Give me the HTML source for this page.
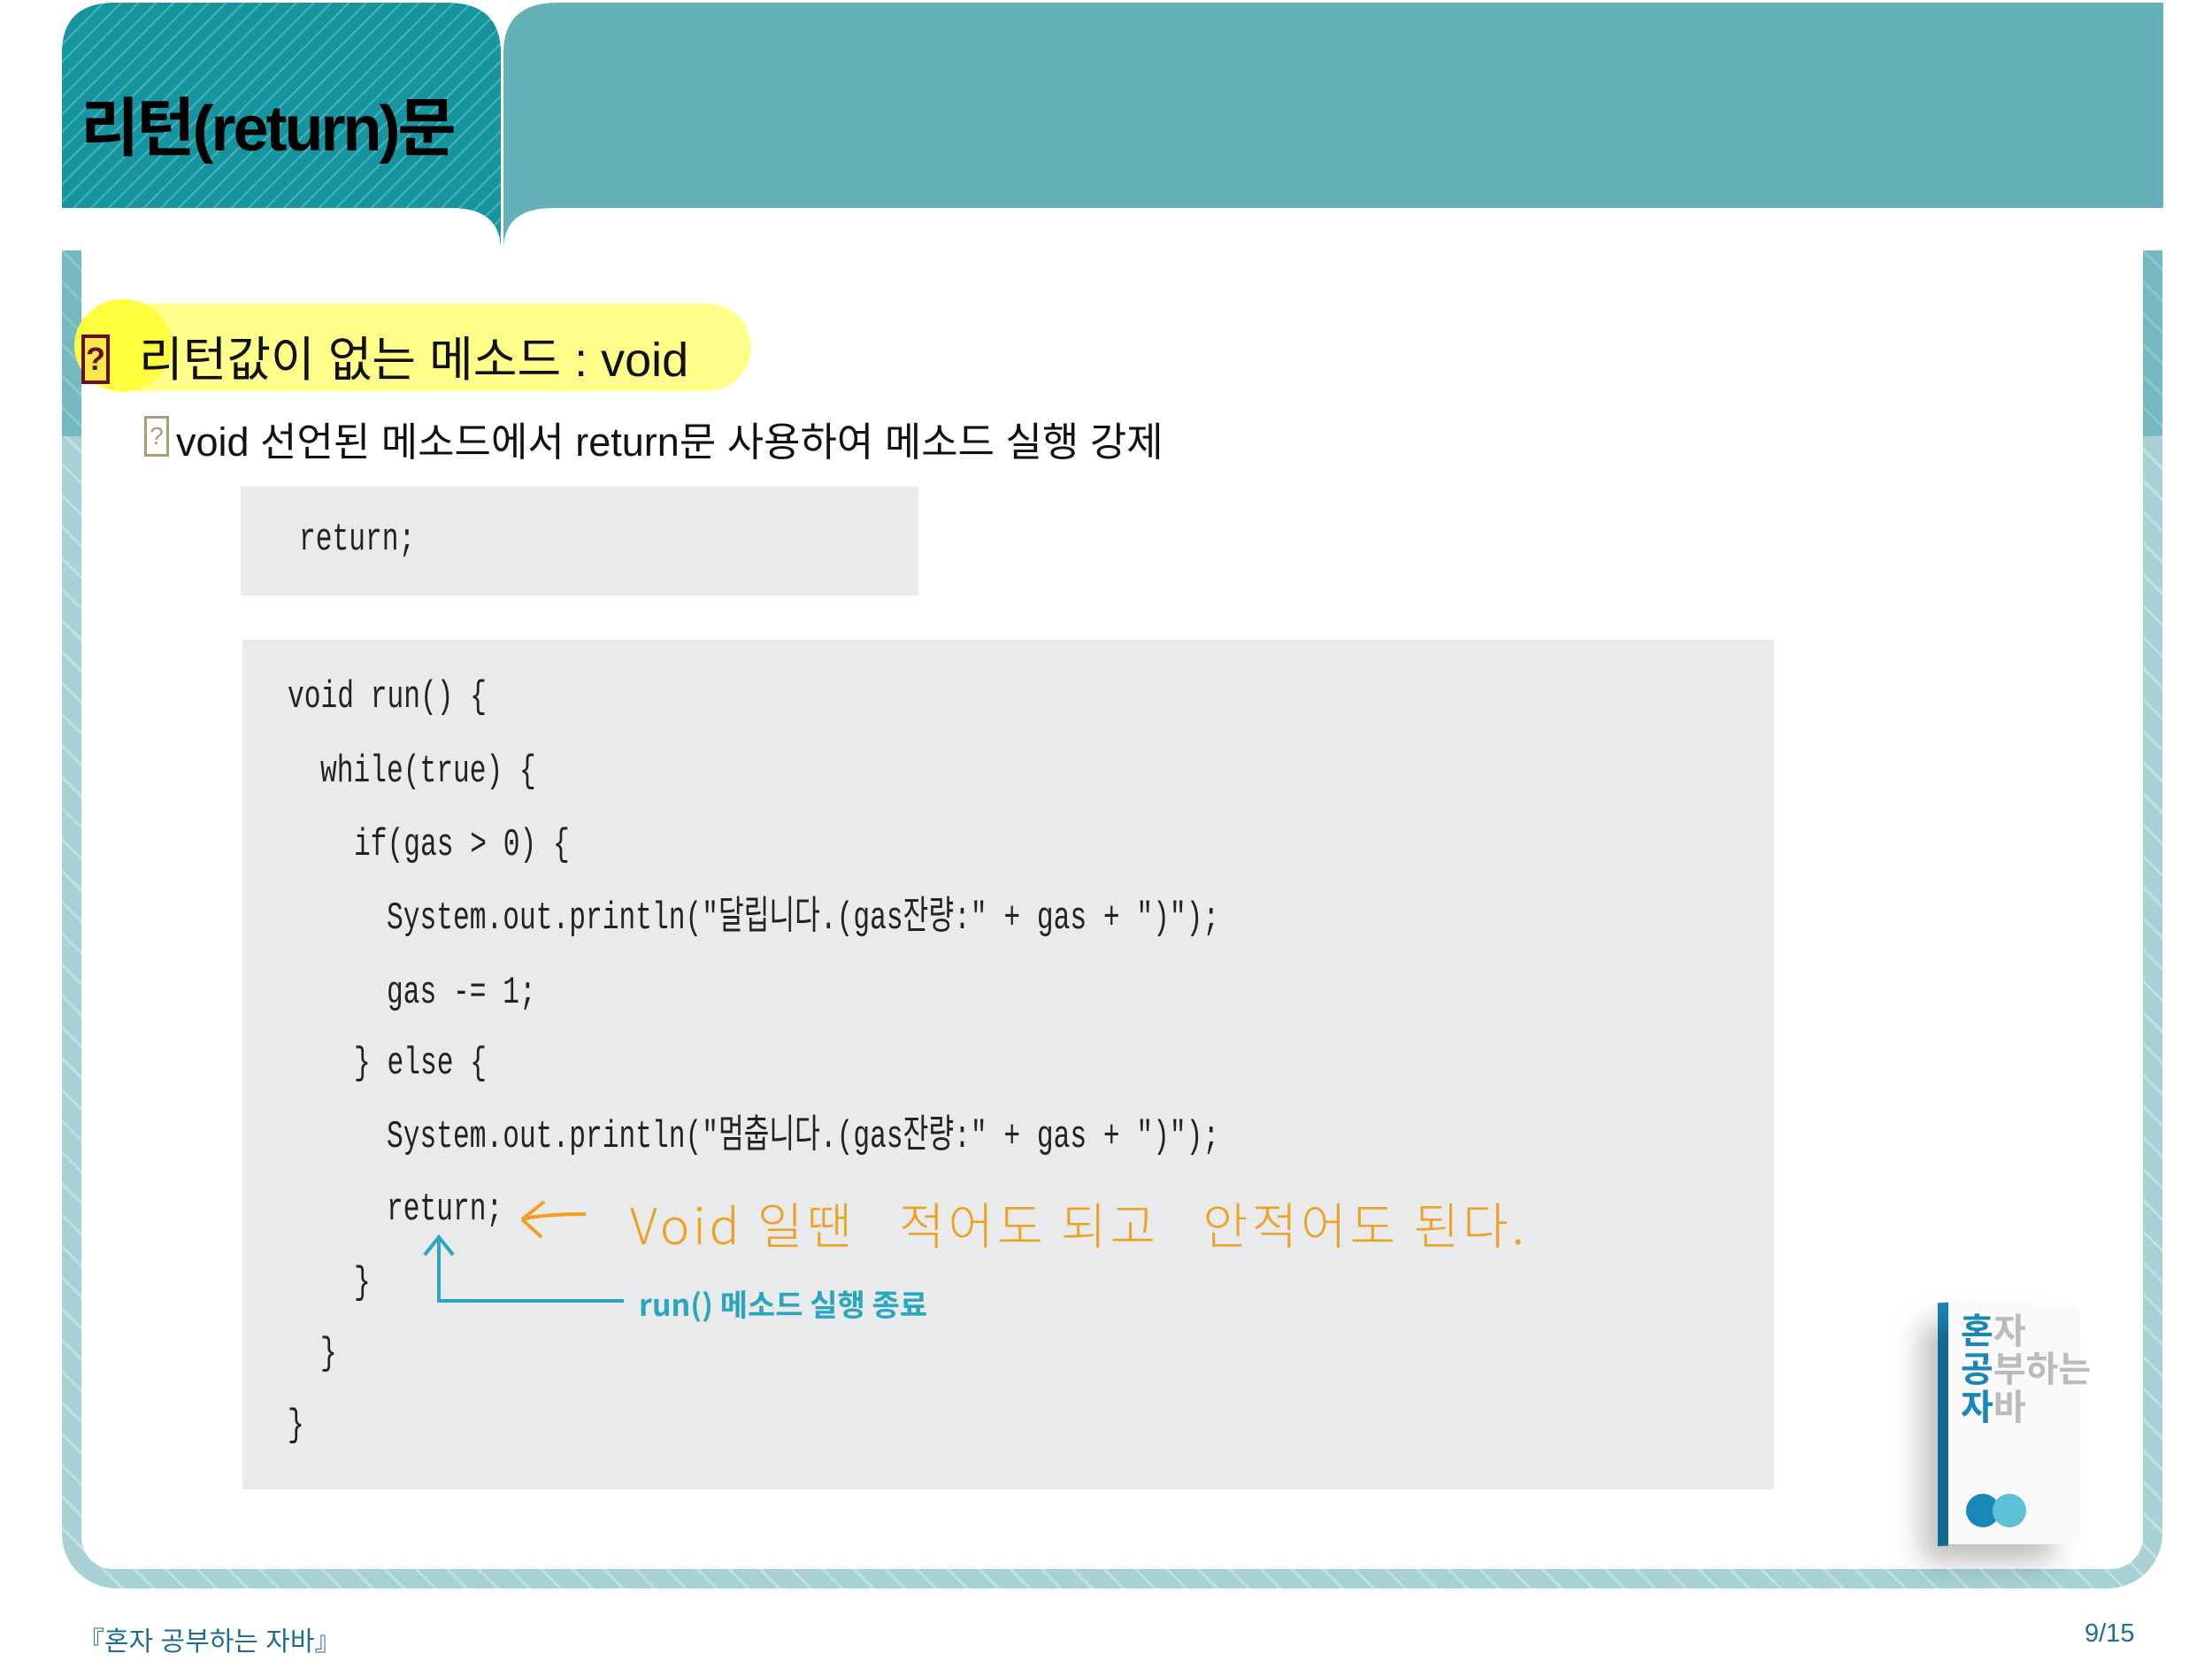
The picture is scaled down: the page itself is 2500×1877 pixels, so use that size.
<!DOCTYPE html>
<html><head><meta charset="utf-8"><style>
*{margin:0;padding:0;box-sizing:border-box}
body{width:2500px;height:1877px;background:#fff;position:relative;overflow:hidden;font-family:"Liberation Sans","Noto Sans CJK KR",sans-serif}
.abs{position:absolute}
.frame{left:70px;top:283px;width:2374px;height:1512px;border:22px solid transparent;border-top:none;border-bottom-width:22px;border-radius:0 0 62px 62px;
background:repeating-linear-gradient(45deg,#a7d1d5 0 22px,#c2e0e3 22px 25px) border-box;}
.frame .in{position:absolute;inset:0;background:#fff;border-radius:0 0 36px 36px}
.dark{top:283px;width:22px;height:210px;background:repeating-linear-gradient(45deg,#74b8c0 0 22px,#8ec6cc 22px 25px)}
.code{background:#e8eaeb}
.mono{font-family:"Liberation Mono","Noto Sans CJK KR",monospace;font-size:44px;color:#222;transform:scaleX(.71);transform-origin:0 50%;white-space:pre;line-height:1}
</style></head><body>
<svg class="abs" style="left:0;top:0" width="2500" height="300">
<defs><pattern id="st" width="14" height="14" patternUnits="userSpaceOnUse" patternTransform="rotate(45)"><rect width="14" height="14" fill="#15959f"/><rect x="0" width="2" height="14" fill="#4fb0b8"/></pattern></defs>
<path d="M70 60 Q70 3 130 3 L505 3 Q566 3 566 60 L566 283 Q566 235 510 235 L70 235 Z" fill="url(#st)"/>
<path d="M569 60 Q569 3 630 3 L2445 3 L2445 235 L625 235 Q569 235 569 283 Z" fill="#65b1ba"/>
</svg>
<div class="abs" style="left:91px;top:86px;font-size:72px;font-weight:bold;letter-spacing:-3px;color:#000">리턴(return)문</div>
<div class="abs frame"><div class="in"></div></div>
<div class="abs dark" style="left:70px"></div>
<div class="abs dark" style="left:2422px"></div>
<div class="abs" style="left:88px;top:343px;width:761px;height:99px;background:#ffff8a;border-radius:50px"></div>
<div class="abs" style="left:84px;top:338px;width:110px;height:105px;background:#ffff40;border-radius:50%"></div>
<div class="abs" style="left:92px;top:378px;width:32px;height:56px;border:4px solid #6a0f20;background:#f6e94a;font:bold 36px 'Liberation Sans';color:#6a0f20;text-align:center;line-height:48px">?</div>
<div class="abs" style="left:157px;top:362px;font-size:54px;color:#111">리턴값이 없는 메소드 : void</div>
<div class="abs" style="left:163px;top:470px;width:28px;height:46px;border:3px solid #a8a070;font:28px 'Liberation Sans';color:#a8a070;text-align:center;line-height:40px">?</div>
<div class="abs" style="left:199px;top:463px;font-size:45px;color:#111">void 선언된 메소드에서 return문 사용하여 메소드 실행 강제</div>
<div class="abs code" style="left:272px;top:550px;width:766px;height:123px"></div>
<div class="abs mono" style="left:338px;top:588px">return;</div>
<div class="abs code" style="left:274px;top:723px;width:1731px;height:960px"></div>
<div class="abs mono" style="left:325px;top:766px">void run() {</div>
<div class="abs mono" style="left:362px;top:850px">while(true) {</div>
<div class="abs mono" style="left:400px;top:933px">if(gas &gt; 0) {</div>
<div class="abs mono" style="left:437px;top:1016px">System.out.println("달립니다.(gas잔량:" + gas + ")");</div>
<div class="abs mono" style="left:437px;top:1100px">gas -= 1;</div>
<div class="abs mono" style="left:400px;top:1180px">} else {</div>
<div class="abs mono" style="left:437px;top:1263px">System.out.println("멈춥니다.(gas잔량:" + gas + ")");</div>
<div class="abs mono" style="left:437px;top:1345px">return;</div>
<div class="abs mono" style="left:400px;top:1428px">}</div>
<div class="abs mono" style="left:362px;top:1508px">}</div>
<div class="abs mono" style="left:325px;top:1589px">}</div>
<svg class="abs" style="left:0;top:0" width="2500" height="1877">
<path d="M590 1378 Q610 1372 662 1372 M590 1378 L615 1358 M590 1378 L612 1398" stroke="#f0a020" stroke-width="4" fill="none"/>
<path d="M496 1400 L496 1470 L705 1470 M480 1418 L496 1398 L512 1418" stroke="#2aa6bf" stroke-width="4" fill="none"/>
</svg>
<div class="abs" style="left:712px;top:1342px;font-size:56px;font-weight:200;color:#f0a020;font-family:'Noto Sans CJK KR',sans-serif;white-space:pre;letter-spacing:4px">Void 일땐   적어도 되고   안적어도 된다.</div>
<div class="abs" style="left:722px;top:1448px;font-size:34px;font-weight:bold;color:#2aa6bf;font-family:'Noto Sans CJK KR',sans-serif;white-space:pre">run() 메소드 실행 종료</div>
<div class="abs" style="left:2190px;top:1472px;width:12px;height:275px;background:#1a87b8;transform:skewY(-4deg)"></div>
<div class="abs" style="left:2202px;top:1475px;width:148px;height:270px;background:#fafafa;box-shadow:-30px 20px 30px rgba(0,0,0,.25)"></div>
<div class="abs" style="left:2216px;top:1480px;font:bold 40px 'Noto Sans CJK KR',sans-serif;line-height:43px;color:#bbb"><span style="color:#1a87b8">혼</span>자<br><span style="color:#1a87b8">공</span>부하는<br><span style="color:#1a87b8">자</span>바</div>
<div class="abs" style="left:2222px;top:1688px;width:38px;height:38px;border-radius:50%;background:#1a87b8"></div>
<div class="abs" style="left:2252px;top:1688px;width:38px;height:38px;border-radius:50%;background:#5bc0d8"></div>
<div class="abs" style="left:88px;top:1830px;font-size:30px;color:#1d6f8d">『혼자 공부하는 자바』</div>
<div class="abs" style="left:2356px;top:1830px;font-size:29px;color:#1d6f8d">9/15</div>
</body></html>
